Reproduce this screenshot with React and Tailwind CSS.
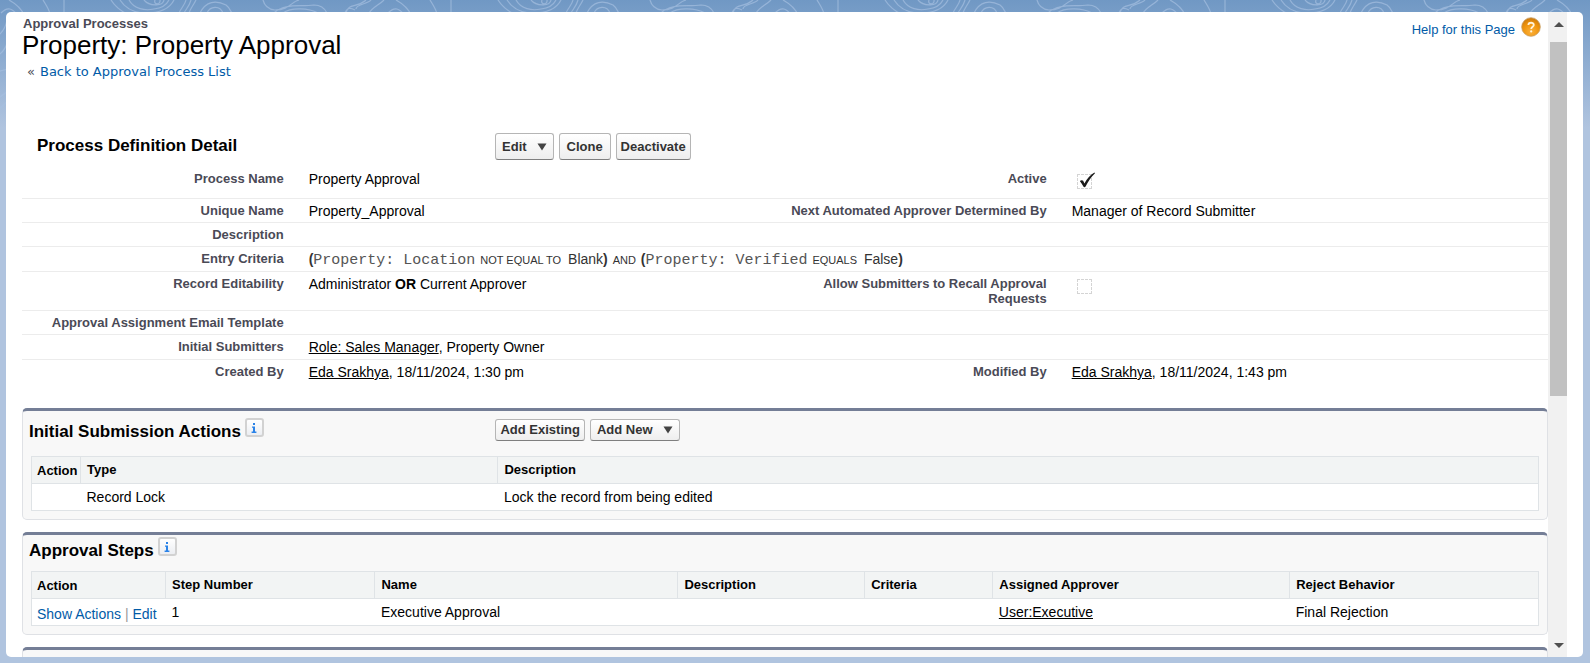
import React from "react";

const link = "text-[#015ba7] hover:underline";
const plainLink = "text-black underline";

function Topography() {
  return (
    <svg className="absolute inset-x-0 top-0 h-32 w-full" aria-hidden="true">
      <defs>
        <pattern id="topo" x="0" y="0" width="387" height="128" patternUnits="userSpaceOnUse">
          <g fill="none" stroke="#a5bfe0" strokeWidth="1.2" opacity="0.7">
            <path d="M1 13C8 6 12 9 17 14M9 0C18 5 22 10 24 15M43 0C46 5 49 9 50 14M64 0v12M111 0C116 8 121 11 127 14M120 0C125 8 133 12 142 13C163 14 171 6 174 0M129 0C134 9 145 11 154 9C163 8 167 4 169 0M144 0C149 6 163 7 164 0M155 0C153 5 161 5 160 0M186 0C185 5 181 8 179 13M191 0C189 7 186 9 184 13M196 0C193 6 190 9 189 13M200 13C206 1 216 0 226 5C230 8 230 11 232 13M207 13C210 6 220 5 223 13M263 0C264 4 267 9 275 10C289 10 291 2 299 0M274 13C284 3 300 7 314 5C322 5 325 9 327 13M283 13C291 7 309 8 318 13M345 13C347 7 351 8 355 10M346 13C348 3 357 8 366 0M356 9C356 4 368 4 371 0M384 0C379 5 373 7 369 13" />
            <path d="M0 34C4 30 6 26 7 20M0 54C4 51 6 47 8 41M0 71L8 69M0 97L8 91M0 108L8 101" />
          </g>
        </pattern>
      </defs>
      <rect width="100%" height="128" fill="url(#topo)" />
    </svg>
  );
}

function Caret() {
  return (
    <svg viewBox="0 0 10 8" className="h-2 w-2.5" aria-hidden="true">
      <path d="M0.5 0.5h9L5 7.5z" fill="#444" />
    </svg>
  );
}

function Button({ children, menu, tall }) {
  return (
    <button
      type="button"
      aria-haspopup={menu ? "menu" : undefined}
      className={
        "flex min-w-[52px] items-center justify-center rounded-[3px] border border-[#b5b5b5] border-b-[#7f7f7f] bg-linear-to-b from-white to-[#eeeeee] text-[13px] font-bold leading-4 text-[#333] " +
        (tall ? "h-[27px] " : "h-[22px] ") +
        (menu ? "gap-2.5 px-1.5" : "px-1")
      }
    >
      {children}
      {menu && <Caret />}
    </button>
  );
}

function InfoButton({ label }) {
  return (
    <button
      type="button"
      aria-label={label}
      className="flex size-[19px] items-center justify-center rounded-[3px] border-2 border-[#d2d2d2] bg-linear-to-b from-white to-[#eceef2]"
    >
      <svg viewBox="0 0 6 10" className="h-2.5 w-1.5" aria-hidden="true">
        <path d="M2 0h2v2H2zM1 3.4h3V8.6h1.4V10H0.6V8.6H2V4.8H1z" fill="#2b83e8" />
      </svg>
    </button>
  );
}

function Check({ checked, label }) {
  return (
    <span className="relative ml-[5px] mt-1 block size-[15px]">
      <input
        type="checkbox"
        aria-label={label}
        checked={checked}
        readOnly
        className="block size-[15px] appearance-none border border-dashed border-[#d4d4d4]"
      />
      {checked && (
        <svg viewBox="0 0 18 17" className="pointer-events-none absolute -top-0.5 left-0.5 h-[17px] w-[18px]" aria-hidden="true">
          <path d="M0.8 9C2 8 3.4 7.8 4.2 8.8L5.4 11.4C8 6.8 11.4 3 15.4 0.6L16 1.2C12 5 9 9.4 6.6 14.6C6 15.4 4.8 15.4 4.4 14.6C3.4 12.8 2.2 10.8 0.8 9z" fill="#1c1c1c" />
        </svg>
      )}
    </span>
  );
}

function Row({ label, value, label2, value2, tall, last }) {
  const line = last ? "" : "border-b border-[#ececec] ";
  const th = line + "pb-1 pr-[13px] pt-1 text-right align-top text-[13px] font-bold leading-[15px] text-[#4a4a56]";
  const td = line + (tall ? "h-[25px] " : "h-6 ") + "pb-0.5 pl-3 pt-[3px] align-top text-sm leading-[18px] text-black";
  return (
    <tr>
      <th scope="row" className={th}>{label}</th>
      <td className={td} colSpan={label2 ? 1 : 3}>{value}</td>
      {label2 && <th scope="row" className={th}>{label2}</th>}
      {label2 && <td className={td}>{value2}</td>}
    </tr>
  );
}

function Criteria() {
  const field = "font-['Liberation_Mono',monospace] text-[15px] leading-none text-[#555]";
  const operator = "mx-px text-[11px] leading-none";
  return (
    <span className="text-[#333]">
      <b>(</b>
      <span className={field}>Property: Location</span> <span className={operator}>NOT EQUAL TO</span>{" "}
      <span className="ml-0.5">Blank</span>
      <b>)</b> <span className={operator}>AND</span> <b>(</b>
      <span className={field}>Property: Verified</span> <span className={operator}>EQUALS</span>{" "}
      <span className="ml-0.5">False</span>
      <b>)</b>
    </span>
  );
}

function Card({ title, actions, compact, children }) {
  return (
    <section className="mb-3 rounded-[5px] border border-t-[3px] border-[#dfe1e5] border-t-[#747e96] bg-[#f8f8f8] px-2 pb-2">
      <div className={compact ? "flex h-9 items-start pt-0.5" : "flex h-[45px] items-start pt-[7px]"}>
        {title && (
          <div className="flex w-[30.8%] items-start gap-1">
            <h2 className="-ml-0.5 pt-0.5 text-[17px] font-bold leading-6 text-black">{title}</h2>
            <InfoButton label={"About " + title} />
          </div>
        )}
        {actions}
      </div>
      {children}
    </section>
  );
}

function List({ cols, widths, rows }) {
  return (
    <table className="w-full table-fixed border-collapse border border-[#dfe3e6] bg-white text-black">
      <colgroup>
        {widths.map((w, i) => (
          <col key={i} className={w} />
        ))}
      </colgroup>
      <thead>
        <tr className="bg-[#f2f4f4]">
          {cols.map((c, i) => (
            <th
              key={c}
              scope="col"
              className={
                "h-[27px] whitespace-nowrap border border-[#dfe3e6] text-left text-[13px] font-bold leading-4 " +
                (i === 0 ? "pl-[5px] pt-0.5" : "pl-1.5")
              }
            >
              {c}
            </th>
          ))}
        </tr>
      </thead>
      <tbody>
        {rows.map((r, n) => (
          <tr key={n}>
            {r.map((c, i) => (
              <td key={i} className={"h-[27px] whitespace-nowrap text-sm leading-4 " + (i === 0 ? "pl-[5px] pt-1" : "pl-1.5")}>
                {c}
              </td>
            ))}
          </tr>
        ))}
      </tbody>
    </table>
  );
}

export default function App() {
  return (
    <div className="relative h-screen overflow-hidden bg-[#b0c4df] font-['Liberation_Sans',Arial,sans-serif]">
      <div className="absolute inset-x-0 top-0 h-32 bg-linear-to-b from-[#7098c4] to-[#b0c4df]" />
      <Topography />
      <div className="relative flex h-full pb-1.5 pl-1.5 pr-[7px] pt-3">
        <div className="flex min-w-0 flex-1 overflow-hidden rounded-[5px] bg-white pr-4">
          <main className="min-w-0 flex-1 overflow-hidden pl-4">
            <header className="flex items-start justify-between pt-1">
              <div>
                <p className="pl-px text-[13px] font-bold leading-4 text-[#4a4a56]">Approval Processes</p>
                <h1 className="text-[26px] leading-[26px] text-black">Property: Property Approval</h1>
                <p className="flex gap-[5px] pl-[5px] pt-1 font-['DejaVu_Sans',Verdana,sans-serif] text-[13px] leading-5 text-[#4a4a56]">
                  <span>«</span>
                  <a href="#list" className={link}>
                    Back to Approval Process List
                  </a>
                </p>
              </div>
              <a href="#help" className={"mr-[7px] flex items-center gap-1.5 text-[13px] leading-4 " + link}>
                <span className="pt-1.5">Help for this Page</span>
                <svg viewBox="0 0 20 20" className="size-5" aria-hidden="true">
                  <defs>
                    <radialGradient id="orb" cx="0.5" cy="0.75" r="0.75">
                      <stop offset="0" stopColor="#fbb03a" />
                      <stop offset="0.6" stopColor="#ee930c" />
                      <stop offset="1" stopColor="#c8780e" />
                    </radialGradient>
                  </defs>
                  <circle cx="10" cy="10" r="9.3" fill="url(#orb)" stroke="#c9a066" strokeWidth="0.8" />
                  <path d="M7.4 7.9C7.4 5 12.8 5 12.8 7.9C12.8 9.7 10.2 9.7 10.2 12" fill="none" stroke="#fff3dc" strokeWidth="1.8" />
                  <circle cx="10.2" cy="14.4" r="1.1" fill="#fff3dc" />
                </svg>
              </a>
            </header>

            <section className="mt-[51px]">
              <div className="flex h-[34px] items-start">
                <h2 className="w-[31%] pl-[15px] text-[17px] font-bold leading-[26px] text-black">Process Definition Detail</h2>
                <div className="flex gap-[5px]">
                  <Button tall menu>Edit</Button>
                  <Button tall>Clone</Button>
                  <Button tall>Deactivate</Button>
                </div>
              </div>
              <table className="w-full table-fixed border-separate border-spacing-0">
                <colgroup>
                  <col className="w-[18%]" />
                  <col className="w-[32%]" />
                  <col className="w-[18%]" />
                  <col className="w-[32%]" />
                </colgroup>
                <tbody>
                  <Row label="Process Name" value="Property Approval" label2="Active" value2={<div className="flex h-[26px]"><Check checked label="Active" /></div>} />
                  <Row label="Unique Name" value="Property_Approval" label2="Next Automated Approver Determined By" value2="Manager of Record Submitter" />
                  <Row label="Description" />
                  <Row tall label="Entry Criteria" value={<Criteria />} />
                  <Row
                    label="Record Editability"
                    value={<>Administrator <b>OR</b> Current Approver</>}
                    label2="Allow Submitters to Recall Approval Requests"
                    value2={<div className="flex"><Check checked={false} label="Allow Submitters to Recall Approval Requests" /></div>}
                  />
                  <Row label="Approval Assignment Email Template" />
                  <Row tall label="Initial Submitters" value={<><a href="#role" className={plainLink}>Role: Sales Manager</a>, Property Owner</>} />
                  <Row
                    last
                    label="Created By"
                    value={<><a href="#created" className={plainLink}>Eda Srakhya</a>, 18/11/2024, 1:30 pm</>}
                    label2="Modified By"
                    value2={<><a href="#modified" className={plainLink}>Eda Srakhya</a>, 18/11/2024, 1:43 pm</>}
                  />
                </tbody>
              </table>
            </section>

            <div className="mt-6">
              <Card
                title="Initial Submission Actions"
                actions={
                  <div className="flex gap-[5px] pt-px">
                    <Button>Add Existing</Button>
                    <Button menu>Add New</Button>
                  </div>
                }
              >
                <List
                  cols={["Action", "Type", "Description"]}
                  widths={["w-[49px]", "w-[27.7%]", "w-auto"]}
                  rows={[["", "Record Lock", "Lock the record from being edited"]]}
                />
              </Card>
              <Card title="Approval Steps" compact>
                <List
                  cols={["Action", "Step Number", "Name", "Description", "Criteria", "Assigned Approver", "Reject Behavior"]}
                  widths={["w-[134px]", "w-[13.9%]", "w-[20.1%]", "w-[12.4%]", "w-[8.5%]", "w-[19.7%]", "w-auto"]}
                  rows={[
                    [
                      <span key="a" className="text-[#999]">
                        <a href="#actions" className={link}>Show Actions</a> | <a href="#edit" className={link}>Edit</a>
                      </span>,
                      "1",
                      "Executive Approval",
                      "",
                      "",
                      <a key="u" href="#user" className={plainLink}>User:Executive</a>,
                      "Final Rejection",
                    ],
                  ]}
                />
              </Card>
              <Card compact />
            </div>
          </main>
          <div className="flex w-[19px] flex-col bg-[#f1f1f1] pl-0.5 pt-px" aria-hidden="true">
            <div className="flex h-[29px] items-center justify-center pb-1.5">
              <svg viewBox="0 0 10 5" className="h-[5px] w-2.5"><path d="M0 5h10L5 0z" fill="#505050" /></svg>
            </div>
            <div className="h-[55%] bg-[#c1c1c1]" />
            <div className="mt-auto flex h-6 items-center justify-center">
              <svg viewBox="0 0 10 5" className="h-[5px] w-2.5"><path d="M0 0h10L5 5z" fill="#505050" /></svg>
            </div>
          </div>
        </div>
      </div>
    </div>
  );
}
